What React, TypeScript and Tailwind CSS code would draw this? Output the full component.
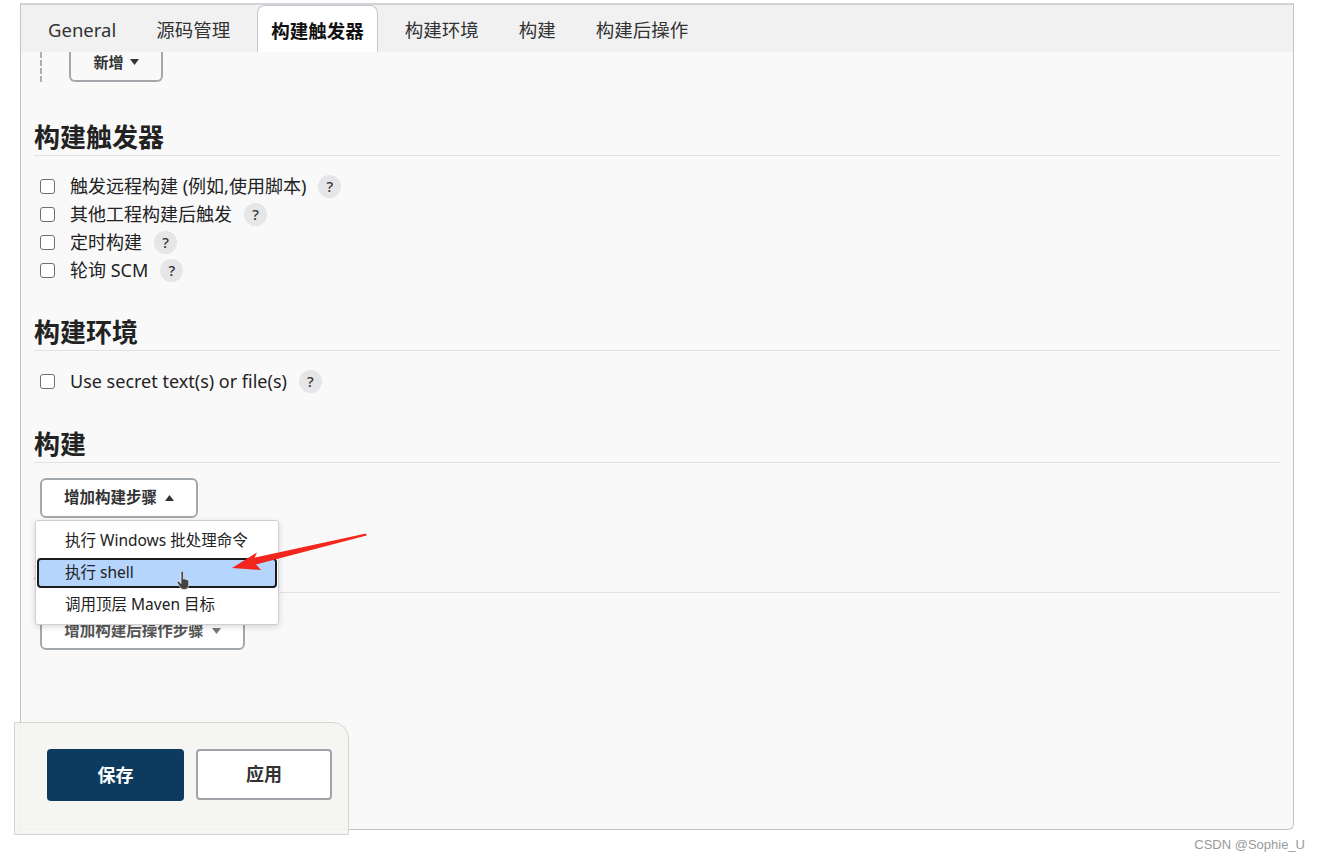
import React from "react";

const tabs = ["General", "源码管理", "构建触发器", "构建环境", "构建", "构建后操作"];

const triggers = ["触发远程构建 (例如,使用脚本)", "其他工程构建后触发", "定时构建", "轮询 SCM"];

function Caret({ up = false, color = "#333" }: { up?: boolean; color?: string }) {
  return (
    <svg width="9" height="6" viewBox="0 0 9 6">
      {up ? <polygon points="0,6 9,6 4.5,0" fill={color} /> : <polygon points="0,0 9,0 4.5,6" fill={color} />}
    </svg>
  );
}

function Help() {
  return (
    <span className="ml-[12px] flex h-[23px] w-[23px] items-center justify-center rounded-full bg-[#e6e6e8] text-[15px] font-medium text-[#333]">
      ?
    </span>
  );
}

function CheckRow({ label }: { label: string }) {
  return (
    <div className="flex h-[28px] items-center pl-[6px]">
      <span className="h-[15px] w-[15px] rounded-[3px] border border-[#6f6f6f] bg-white" />
      <span className="ml-[15px] text-[18px] leading-none text-[#222]">{label}</span>
      <Help />
    </div>
  );
}

function Heading({ children, className = "" }: { children: React.ReactNode; className?: string }) {
  return (
    <div className={`border-b border-[#e2e2e4] pb-[2px] text-[26px] font-bold leading-[32px] text-[#222] ${className}`}>
      {children}
    </div>
  );
}

export default function App() {
  return (
    <div className="relative h-[860px] w-[1319px] overflow-hidden bg-white font-['Noto_Sans','Noto_Sans_CJK_SC',sans-serif]">
      <div className="ml-[20px] mt-[3px] flex h-[827px] w-[1274px] flex-col rounded-br-md border-x border-b border-t-2 border-x-[#c4c4c8] border-b-[#c4c4c8] border-t-[#d2d2d8] bg-[#f9f9fa]">
        {/* tab bar */}
        <div className="flex h-[47px] shrink-0 items-end gap-[14px] bg-[#f1f1f2] pl-[14px]">
          {tabs.map((t) => {
            const active = t === "构建触发器";
            return (
              <div
                key={t}
                className={`flex h-[47px] items-center px-[13px] pt-[3px] text-[18.5px] ${
                  active
                    ? "rounded-t-lg border border-b-0 border-[#c8c8cc] bg-white font-bold text-[#111]"
                    : "text-[#333]"
                }`}
              >
                {t}
              </div>
            );
          })}
        </div>

        {/* content */}
        <div className="relative flex-1 px-[13px]">
          <div className="flex pl-[6px]">
            <div className="h-[30px] border-l-2 border-dashed border-[#b0b0b0]" />
            <div className="ml-[27px] flex h-[30px] w-[94px] items-center justify-center gap-[6px] rounded-b-md border-x-2 border-b-2 border-[#a3a7ab] pb-[8px] text-[15px] font-bold text-[#333]">
              新增 <Caret />
            </div>
          </div>

          <Heading className="mt-[39px]">构建触发器</Heading>
          <div className="mt-[16px]">
            {triggers.map((t) => (
              <CheckRow key={t} label={t} />
            ))}
          </div>

          <Heading className="mt-[32px]">构建环境</Heading>
          <div className="mt-[16px]">
            <CheckRow label="Use secret text(s) or file(s)" />
          </div>

          <Heading className="mt-[33px]">构建</Heading>
          <div className="relative mt-[15px] pl-[6px]">
            <div className="flex h-[40px] w-[158px] items-center justify-center gap-[8px] rounded-md border-2 border-[#a3a8ad] bg-white text-[15.5px] font-bold text-[#333]">
              增加构建步骤 <Caret up />
            </div>

            {/* dropdown menu */}
            <div className="absolute left-[1px] top-[42px] z-10 w-[244px] rounded-[3px] border border-[#cfcfd2] bg-white pb-[3px] pt-[4px] text-[15.5px] text-[#222] shadow-[0_2px_6px_rgba(0,0,0,0.15)]">
              <div className="flex h-[32px] items-center pl-[29px]">执行 Windows 批处理命令</div>
              <div className="h-[32px] px-[1px] py-[1px]">
                <div className="flex h-full items-center rounded-[4px] border-2 border-[#1b1b1b] bg-[#b5d5fd] pl-[26px]">执行 shell</div>
              </div>
              <div className="flex h-[32px] items-center pl-[29px]">调用顶层 Maven 目标</div>
            </div>
          </div>

          <Heading className="mt-[40px]">构建后操作</Heading>
          <div className="mt-[19px] pl-[6px]">
            <div className="flex h-[38px] w-[205px] items-center justify-center gap-[8px] rounded-md border-2 border-[#a3a8ad] bg-white text-[15.5px] font-bold text-[#555]">
              增加构建后操作步骤 <Caret color="#777" />
            </div>
          </div>
        </div>
      </div>

      {/* red arrow annotation */}
      <svg className="pointer-events-none absolute left-0 top-0 z-20" width="1319" height="860">
        <polygon points="366,533.5 366.6,535.5 250,566 248,559" fill="#f2261d" />
        <polygon points="232,568 257,552.5 253,561 261,570" fill="#f2261d" />
      </svg>

      {/* mouse cursor */}
      <svg className="pointer-events-none absolute left-[176px] top-[571px] z-20" width="16" height="20" viewBox="0 0 16 20">
        <path
          d="M5 1.5c0-.8.5-1.3 1.2-1.3S7.4.7 7.4 1.5V8l.6-.2c.6-.2 1.2.1 1.4.6l.3-.1c.6-.2 1.2.1 1.4.7l.3-.1c.7-.1 1.300.3 1.3 1v4c0 2.5-1.5 4.5-4 4.5H7.2c-1.2 0-2-.6-2.700-1.600L1.3 12c-.4-.6-.2-1.3.3-1.6.5-.3 1.2-.2 1.6.3L5 12.5z"
          fill="#444"
          stroke="#fff"
          strokeWidth="0.6"
        />
      </svg>

      {/* sticky save bar */}
      <div className="absolute left-[14px] top-[722px] z-10 flex h-[113px] w-[335px] items-start gap-[12px] rounded-tr-[16px] border border-[#cbd9d0] bg-[#f4f5ef]/90 pl-[32px] pt-[26px]">
        <div className="flex h-[52px] w-[137px] items-center justify-center rounded-[4px] bg-[#0c3b5f] text-[18px] font-bold text-white">
          保存
        </div>
        <div className="flex h-[51px] w-[136px] items-center justify-center rounded-[4px] border-2 border-[#a0a4aa] bg-white text-[18px] font-bold text-[#333]">
          应用
        </div>
      </div>

      <div className="absolute bottom-[6px] right-[14px] font-['Liberation_Sans',Arial,sans-serif] text-[13px] text-[#9a9a9a]">
        CSDN @Sophie_U
      </div>
    </div>
  );
}
